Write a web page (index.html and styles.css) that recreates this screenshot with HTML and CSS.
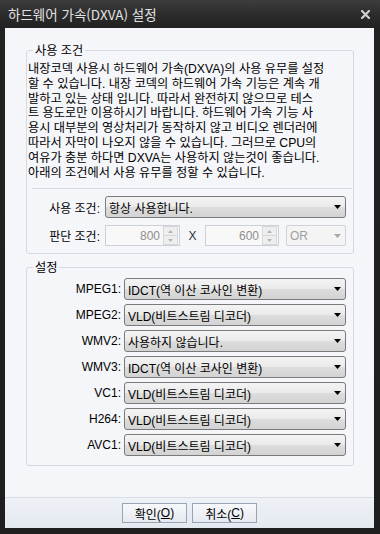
FILE: index.html
```html
<!DOCTYPE html>
<html lang="ko">
<head>
<meta charset="utf-8">
<title>하드웨어 가속(DXVA) 설정</title>
<link rel="stylesheet" href="styles.css">
</head>
<body>
<div class="window">
  <div class="titlebar">
    <span class="title">하드웨어 가속(DXVA) 설정</span>
    <svg class="close" width="9" height="9" viewBox="0 0 9 9"><path d="M1 1 L8 8 M8 1 L1 8" stroke="#d0d0d0" stroke-width="2.2" stroke-linecap="square"/></svg>
  </div>
  <div class="client">
    <div class="content">
      <fieldset class="group g1">
        <legend>사용 조건</legend>
        <p class="desc">내장코덱 사용시 하드웨어 가속(DXVA)의 사용 유무를 설정<br>할 수 있습니다. 내장 코덱의 하드웨어 가속 기능은 계속 개<br>발하고 있는 상태 입니다. 따라서 완전하지 않으므로 테스<br>트 용도로만 이용하시기 바랍니다. 하드웨어 가속 기능 사<br>용시 대부분의 영상처리가 동작하지 않고 비디오 렌더러에<br>따라서 자막이 나오지 않을 수 있습니다. 그러므로 CPU의<br>여유가 충분 하다면 DXVA는 사용하지 않는것이 좋습니다.<br>아래의 조건에서 사용 유무를 정할 수 있습니다.</p>
        <div class="sep"></div>
        <div class="row r1">
          <span class="lbl">사용 조건:</span>
          <div class="combo c-main"><span>항상 사용합니다.</span><svg class="arrow" width="7" height="4" viewBox="0 0 7 4"><path d="M0 0 H7 L3.5 4 Z" fill="#000"/></svg></div>
        </div>
        <div class="row r2">
          <span class="lbl">판단 조건:</span>
          <div class="spin s1"><span class="num">800</span><span class="spinbtns"><span class="sb"><svg width="5" height="3" viewBox="0 0 5 3"><path d="M0 3 H5 L2.5 0 Z" fill="#b5b5b5"/></svg></span><span class="sb"><svg width="5" height="3" viewBox="0 0 5 3"><path d="M0 0 H5 L2.5 3 Z" fill="#b5b5b5"/></svg></span></span></div>
          <span class="xsep">X</span>
          <div class="spin s2"><span class="num">600</span><span class="spinbtns"><span class="sb"><svg width="5" height="3" viewBox="0 0 5 3"><path d="M0 3 H5 L2.5 0 Z" fill="#b5b5b5"/></svg></span><span class="sb"><svg width="5" height="3" viewBox="0 0 5 3"><path d="M0 0 H5 L2.5 3 Z" fill="#b5b5b5"/></svg></span></span></div>
          <div class="combo disabled c-or"><span>OR</span><svg class="arrow" width="7" height="4" viewBox="0 0 7 4"><path d="M0 0 H7 L3.5 4 Z" fill="#a8a8a8"/></svg></div>
        </div>
      </fieldset>
      <fieldset class="group g2">
        <legend>설정</legend>
        <div class="codecs">
          <div class="crow"><span class="clbl">MPEG1:</span><div class="combo c-codec"><span>IDCT(역 이산 코사인 변환)</span><svg class="arrow" width="7" height="4" viewBox="0 0 7 4"><path d="M0 0 H7 L3.5 4 Z" fill="#000"/></svg></div></div>
          <div class="crow"><span class="clbl">MPEG2:</span><div class="combo c-codec"><span>VLD(비트스트림 디코더)</span><svg class="arrow" width="7" height="4" viewBox="0 0 7 4"><path d="M0 0 H7 L3.5 4 Z" fill="#000"/></svg></div></div>
          <div class="crow"><span class="clbl">WMV2:</span><div class="combo c-codec"><span>사용하지 않습니다.</span><svg class="arrow" width="7" height="4" viewBox="0 0 7 4"><path d="M0 0 H7 L3.5 4 Z" fill="#000"/></svg></div></div>
          <div class="crow"><span class="clbl">WMV3:</span><div class="combo c-codec"><span>IDCT(역 이산 코사인 변환)</span><svg class="arrow" width="7" height="4" viewBox="0 0 7 4"><path d="M0 0 H7 L3.5 4 Z" fill="#000"/></svg></div></div>
          <div class="crow"><span class="clbl">VC1:</span><div class="combo c-codec"><span>VLD(비트스트림 디코더)</span><svg class="arrow" width="7" height="4" viewBox="0 0 7 4"><path d="M0 0 H7 L3.5 4 Z" fill="#000"/></svg></div></div>
          <div class="crow"><span class="clbl">H264:</span><div class="combo c-codec"><span>VLD(비트스트림 디코더)</span><svg class="arrow" width="7" height="4" viewBox="0 0 7 4"><path d="M0 0 H7 L3.5 4 Z" fill="#000"/></svg></div></div>
          <div class="crow"><span class="clbl">AVC1:</span><div class="combo c-codec"><span>VLD(비트스트림 디코더)</span><svg class="arrow" width="7" height="4" viewBox="0 0 7 4"><path d="M0 0 H7 L3.5 4 Z" fill="#000"/></svg></div></div>
        </div>
      </fieldset>
    </div>
    <div class="footer">
      <div class="btn">확인(<u>O</u>)</div>
      <div class="btn">취소(<u>C</u>)</div>
    </div>
  </div>
</div>
</body>
</html>
```
FILE: styles.css
```css
* { box-sizing: border-box; }
html, body { margin: 0; padding: 0; }
body {
  width: 380px;
  height: 534px;
  overflow: hidden;
  font-family: "Liberation Sans", "Noto Sans CJK KR", sans-serif;
  font-size: 12px;
  color: #000;
  background: #1d1d1d;
}
.window {
  width: 380px;
  height: 534px;
  display: flex;
  flex-direction: column;
  background: linear-gradient(#3d3d3d 0, #2c2c2c 14px, #222 28px, #1e1e1e 100%);
}
.titlebar {
  height: 28px;
  flex: none;
  display: flex;
  align-items: center;
  justify-content: space-between;
  padding: 0 10px 0 8px;
}
.title {
  color: #e2e2e2;
  font-family: "Noto Sans CJK KR", "Liberation Sans", sans-serif;
  font-size: 13.5px;
  line-height: 16px;
}
.close { display: block; }
.client {
  flex: 1;
  margin: 0 6px 6px 5px;
  display: flex;
  flex-direction: column;
  background: #f5f6fa;
}
.content {
  flex: 1;
  padding: 15px 20px 0 21px;
}
.group {
  margin: 0;
  padding: 5px 7px 7px 1px;
  border: 1px solid #d6dae0;
  border-radius: 3px;
  min-width: 0;
}
.group legend {
  margin-left: 5px;
  padding: 0 2px;
  line-height: 14px;
  font-size: 12.2px;
  font-family: "Noto Sans CJK KR", sans-serif;
}
.g2 {
  margin-top: 6px;
  padding: 4px 7px 9px 1px;
}
.desc {
  margin: 0;
  font-size: 12.2px;
  line-height: 14.8px;
  white-space: nowrap;
}
.sep {
  height: 1px;
  background: #d6dae0;
  margin: 8px -6px 7px 4px;
}
.row { display: flex; align-items: center; }
.r2 { margin-top: 7px; }
.lbl {
  width: 72px;
  flex: none;
  text-align: right;
  margin-right: 5px;
  white-space: nowrap;
}
.combo {
  height: 22px;
  border: 1px solid #7a7a7a;
  border-radius: 3px;
  background: linear-gradient(#f4f4f4, #eaeaea 50%, #dddddd 51%, #d3d3d3);
  display: flex;
  align-items: center;
  justify-content: space-between;
  padding: 0 4px 0 3px;
  white-space: nowrap;
}
.combo .arrow { flex: none; display: block; }
.c-main { width: 241px; }
.c-codec { width: 222px; }
.c-or {
  width: 60px;
  height: 21px;
  margin-left: 7px;
}
.combo.disabled {
  border-color: #cfd2d7;
  border-radius: 2px;
  background: #f4f4f4;
  color: #a0a0a0;
}
.spin {
  height: 21px;
  border: 1px solid #cdd0d5;
  background: #f8f8f8;
  display: flex;
  align-items: center;
  justify-content: flex-end;
  color: #8e8e8e;
  padding: 0 1px 0 0;
}
.s1 { width: 75px; }
.s2 { width: 74px; }
.num { margin-right: 3px; }
.spinbtns {
  width: 15px;
  height: 19px;
  display: flex;
  flex-direction: column;
}
.sb {
  flex: 1;
  border: 1px solid #d5d8dc;
  background: #eeeeee;
  display: flex;
  align-items: center;
  justify-content: center;
}
.sb + .sb { border-top: none; }
.sb svg { display: block; }
.xsep {
  width: 25px;
  text-align: center;
  color: #333;
}
.codecs {
  display: flex;
  flex-direction: column;
  gap: 4px;
}
.crow { display: flex; align-items: center; }
.clbl {
  width: 93px;
  flex: none;
  text-align: right;
  margin-right: 3px;
}
.footer {
  height: 31px;
  flex: none;
  border-top: 1px solid #d8dde5;
  background: linear-gradient(#eef1f6, #e4e9f0);
  display: flex;
  justify-content: center;
  align-items: center;
  gap: 5px;
}
.btn {
  width: 65px;
  height: 20px;
  border: 1px solid #97a4b6;
  background: linear-gradient(#f6f8fb, #e6eaf0);
  display: flex;
  align-items: center;
  justify-content: center;
  font-size: 12px;
}
.btn u { text-underline-offset: 1px; }
```
